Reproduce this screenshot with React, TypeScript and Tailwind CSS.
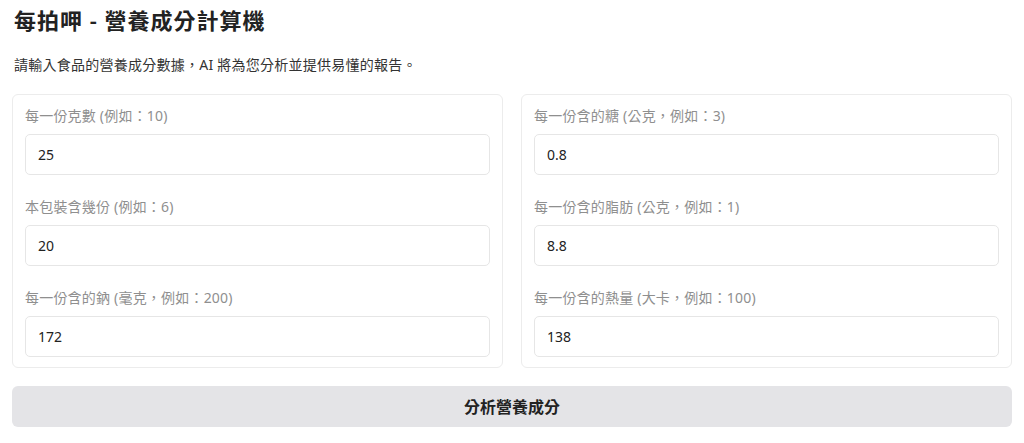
import { useState } from 'react'

type Field = {
  key: string
  label: string
  value: string
}

const leftFields: Field[] = [
  { key: 'grams', label: '每一份克數 (例如：10)', value: '25' },
  { key: 'servings', label: '本包裝含幾份 (例如：6)', value: '20' },
  { key: 'sodium', label: '每一份含的鈉 (毫克，例如：200)', value: '172' },
]

const rightFields: Field[] = [
  { key: 'sugar', label: '每一份含的糖 (公克，例如：3)', value: '0.8' },
  { key: 'fat', label: '每一份含的脂肪 (公克，例如：1)', value: '8.8' },
  { key: 'calories', label: '每一份含的熱量 (大卡，例如：100)', value: '138' },
]

function FieldPanel({ fields, values, onChange }: { fields: Field[]; values: Record<string, string>; onChange: (key: string, value: string) => void }) {
  return (
    <div className="rounded-md border border-[#ececec] bg-white px-3 pt-[11px] pb-[10px]">
      <div className="flex flex-col gap-[22px]">
        {fields.map((field) => (
          <label key={field.key} className="block">
            <span className="block text-[14px] leading-5 tracking-[0.2px] text-[#8f8f8f]">{field.label}</span>
            <input
              value={values[field.key]}
              onChange={(event) => onChange(field.key, event.target.value)}
              className="mt-2 block h-[41px] w-full rounded-[5px] border border-[#e6e6e6] bg-white px-3 text-[14px] text-[#222] outline-none"
            />
          </label>
        ))}
      </div>
    </div>
  )
}

export default function App() {
  const [values, setValues] = useState<Record<string, string>>(() =>
    Object.fromEntries([...leftFields, ...rightFields].map((field) => [field.key, field.value]))
  )

  const update = (key: string, value: string) => setValues((current) => ({ ...current, [key]: value }))

  return (
    <div className="min-h-screen bg-white px-[12px] pt-[6px] font-['Noto_Sans','Noto_Sans_CJK_TC',sans-serif] text-[#222]">
      <h1 className="pl-[2px] text-[22px] font-semibold leading-7 tracking-[1px] text-[#222]">每拍呷 - 營養成分計算機</h1>
      <p className="mt-[21px] pl-[2px] text-[14px] leading-5 tracking-[0.25px] text-[#333]">請輸入食品的營養成分數據，AI 將為您分析並提供易懂的報告。</p>

      <section className="mt-[19px] grid grid-cols-2 gap-[18px]">
        <FieldPanel fields={leftFields} values={values} onChange={update} />
        <FieldPanel fields={rightFields} values={values} onChange={update} />
      </section>

      <button className="mt-[18px] block h-[41px] w-full rounded-md bg-[#e4e4e7] text-[16px] font-bold text-[#222]">分析營養成分</button>
    </div>
  )
}
